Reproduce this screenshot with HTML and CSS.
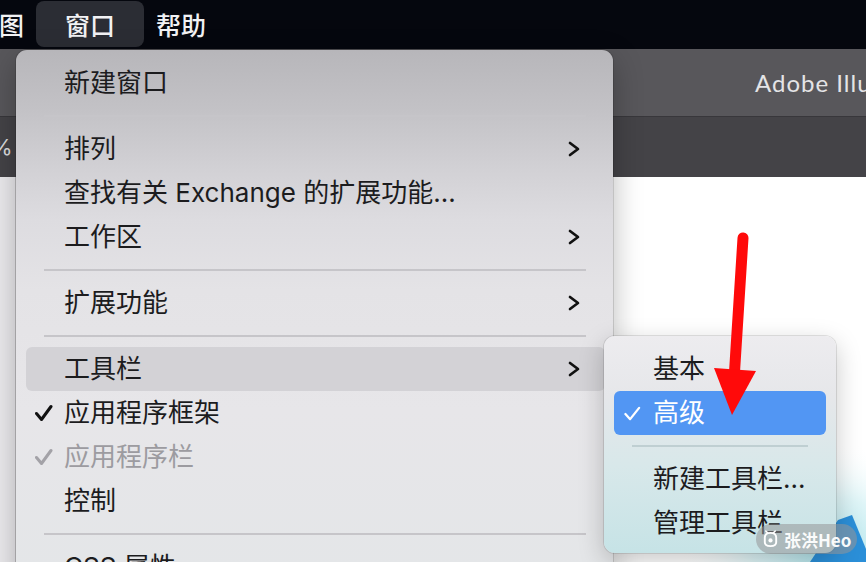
FILE: index.html
```html
<!DOCTYPE html>
<html lang="zh-CN">
<head>
<meta charset="utf-8">
<title>窗口菜单</title>
<link rel="stylesheet" href="styles.css">
</head>
<body>
<div class="screen">
  <header class="menubar">
    <span class="mb-item first">图</span>
    <span class="mb-item active">窗口</span>
    <span class="mb-item">帮助</span>
  </header>
  <div class="appbar"><span class="app-title">Adobe Illustrator 2021</span></div>
  <div class="toolbar"><span class="zoom">%</span></div>
  <div class="workspace">
    <div class="side"></div>
    <div class="canvas">
      <svg class="art" viewBox="0 0 252 385" width="252" height="385">
        <defs>
          <radialGradient id="glow" cx="0.85" cy="0.95" r="0.6">
            <stop offset="0" stop-color="#9fdde6" stop-opacity="0.9"/>
            <stop offset="0.5" stop-color="#c9eef2" stop-opacity="0.6"/>
            <stop offset="1" stop-color="#ffffff" stop-opacity="0"/>
          </radialGradient>
        </defs>
        <rect x="0" y="200" width="252" height="185" fill="url(#glow)"/>
        <polygon points="224,343 238,338 252,372 252,385 196,385" fill="#2b8fd8"/>
      </svg>
    </div>
  </div>

  <nav class="menu main-menu">
    <div class="item"><span class="chk"></span><span class="label">新建窗口</span></div>
    <div class="sep"></div>
    <div class="item"><span class="chk"></span><span class="label">排列</span>
      <svg class="chev" viewBox="0 0 12 16" width="12" height="16"><polyline points="2,2 10,8 2,14"/></svg></div>
    <div class="item"><span class="chk"></span><span class="label">查找有关 Exchange 的扩展功能...</span></div>
    <div class="item"><span class="chk"></span><span class="label">工作区</span>
      <svg class="chev" viewBox="0 0 12 16" width="12" height="16"><polyline points="2,2 10,8 2,14"/></svg></div>
    <div class="sep"></div>
    <div class="item"><span class="chk"></span><span class="label">扩展功能</span>
      <svg class="chev" viewBox="0 0 12 16" width="12" height="16"><polyline points="2,2 10,8 2,14"/></svg></div>
    <div class="sep"></div>
    <div class="item open"><span class="chk"></span><span class="label">工具栏</span>
      <svg class="chev" viewBox="0 0 12 16" width="12" height="16"><polyline points="2,2 10,8 2,14"/></svg></div>
    <div class="item"><span class="chk"><svg viewBox="0 0 18 18" width="18" height="18"><polyline class="tick" points="1.5,9.5 6.5,15.5 16,2.5"/></svg></span><span class="label">应用程序框架</span></div>
    <div class="item disabled"><span class="chk"><svg viewBox="0 0 18 18" width="18" height="18"><polyline class="tick" points="1.5,9.5 6.5,15.5 16,2.5"/></svg></span><span class="label">应用程序栏</span></div>
    <div class="item"><span class="chk"></span><span class="label">控制</span></div>
    <div class="sep"></div>
    <div class="item"><span class="chk"></span><span class="label">CSS 属性</span></div>
  </nav>

  <nav class="menu sub-menu">
    <div class="item"><span class="chk"></span><span class="label">基本</span></div>
    <div class="item selected"><span class="chk"><svg viewBox="0 0 18 18" width="17" height="17"><polyline class="tick thin" points="1.5,9.5 6.5,15 16,3"/></svg></span><span class="label">高级</span></div>
    <div class="sep"></div>
    <div class="item"><span class="chk"></span><span class="label">新建工具栏...</span></div>
    <div class="item"><span class="chk"></span><span class="label">管理工具栏</span></div>
  </nav>

  <svg class="arrow" viewBox="0 0 866 562" width="866" height="562">
    <line x1="743" y1="238" x2="734" y2="380" stroke="#ff0a0a" stroke-width="11" stroke-linecap="round"/>
    <polygon points="714,368 756,371 732,415" fill="#ff0a0a"/>
  </svg>

  <div class="watermark">
    <svg viewBox="0 0 20 20" width="19" height="19"><path d="M4 8 Q4 3 10 3 Q16 3 16 8 L16 13 Q16 17 10 17 Q4 17 4 13 Z" fill="none" stroke="#fff" stroke-width="2"/><path d="M7 3 L5 1 M13 3 L15 1" stroke="#fff" stroke-width="1.6" stroke-linecap="round"/><circle cx="10" cy="11" r="2.2" fill="#fff"/></svg>
    <span class="wm-text">张洪Heo</span>
  </div>
</div>
</body>
</html>
```

FILE: styles.css
```css
* { box-sizing: border-box; margin: 0; padding: 0; }

html, body {
  width: 866px;
  height: 562px;
  overflow: hidden;
  background: #ffffff;
}

body {
  font-family: "Inter", "Noto Sans CJK SC", sans-serif;
}

.screen {
  position: relative;
  width: 866px;
  height: 562px;
  overflow: hidden;
  display: flex;
  flex-direction: column;
}

/* top system menu bar */
.menubar {
  height: 49px;
  flex: none;
  background: #05070e;
  display: flex;
  align-items: flex-start;
  padding-top: 1px;
}

.mb-item {
  height: 46px;
  display: flex;
  align-items: center;
  padding: 0 12px;
  color: #f2f2f4;
  font-size: 25px;
  font-weight: 500;
  border-radius: 8px;
}

.mb-item.first { margin-left: -13px; }

.mb-item.active {
  padding: 0 29px;
  background: #2b2d34;
}

/* application bar */
.appbar {
  height: 68px;
  flex: none;
  background: #58575b;
  border-bottom: 1px solid #38373b;
  display: flex;
  align-items: center;
  padding-left: 755px;
  white-space: nowrap;
  overflow: hidden;
}

.app-title {
  color: #e4e4e6;
  font-size: 24px;
  font-family: "Lato", "Inter", sans-serif;
  letter-spacing: 1px;
}

.toolbar {
  height: 60px;
  flex: none;
  background: #444347;
  display: flex;
  align-items: center;
}

.zoom {
  color: #dcdcde;
  font-size: 22px;
  margin-left: -9px;
}

.workspace {
  flex: 1;
  display: flex;
}

.side {
  width: 16px;
  flex: none;
  background: #ecebee;
  border-right: 1px solid #d6d5d9;
}

.canvas {
  flex: 1;
  background: #ffffff;
  display: flex;
  justify-content: flex-end;
}

.art { display: block; }

/* menus */
.menu {
  position: absolute;
  border-radius: 11px;
  color: #1c1c1e;
  font-size: 26px;
}

.main-menu {
  left: 16px;
  top: 50px;
  width: 597px;
  height: 560px;
  padding: 11px 8px 0 10px;
  background: linear-gradient(to bottom,
    #b7b6ba 0px,
    #c3c2c6 60px,
    #d2d1d5 120px,
    #dddce0 170px,
    #e4e3e6 240px,
    #e7e6e9 360px,
    #e4e6e8 520px);
  box-shadow: 0 10px 30px rgba(0,0,0,0.28), 0 0 0 1px rgba(0,0,0,0.12);
}

.sub-menu {
  left: 604px;
  top: 336px;
  width: 232px;
  height: 217px;
  padding: 11px 10px 9px 10px;
  background: linear-gradient(to bottom,
    #edecef 0px,
    #e6e7ea 60px,
    #d8e8ea 130px,
    #c6e3e6 217px);
  box-shadow: 0 8px 26px rgba(0,0,0,0.22), 0 0 0 1px rgba(0,0,0,0.10);
}

.item {
  height: 44px;
  display: flex;
  align-items: center;
  border-radius: 6px;
  padding-right: 25px;
  white-space: nowrap;
}

.chk {
  width: 38px;
  flex: none;
  display: flex;
  align-items: center;
  padding-left: 9px;
}

.sub-menu .chk { width: 39px; padding-left: 10px; }

.chk svg { display: block; }

.tick {
  fill: none;
  stroke: #111;
  stroke-width: 3;
  stroke-linecap: round;
  stroke-linejoin: round;
}

.tick.thin { stroke: #fff; stroke-width: 2.4; }

.label { flex: 1; line-height: 1; }

.chev {
  display: block;
  fill: none;
  stroke: #111;
  stroke-width: 2.7;
  stroke-linecap: round;
  stroke-linejoin: round;
}

.item.open { background: #d3d2d6; }

.item.disabled { color: #9c9ba0; }
.item.disabled .tick { stroke: #a3a2a7; }

.item.selected {
  background: #5296f3;
  color: #ffffff;
}

.sep {
  height: 2px;
  margin: 10px 19px 10px 18px;
  background: #c6c5c9;
}

.sub-menu .sep {
  margin: 10px 18px;
  background: #bfcfd2;
}

/* annotation overlay */
.arrow {
  position: absolute;
  left: 0;
  top: 0;
  pointer-events: none;
}

.watermark {
  position: absolute;
  left: 756px;
  top: 524px;
  width: 101px;
  height: 30px;
  border-radius: 15px;
  background: rgba(150, 150, 152, 0.55);
  display: flex;
  align-items: center;
  gap: 4px;
  padding-left: 5px;
}

.watermark svg { display: block; }

.wm-text {
  color: #ffffff;
  font-size: 17px;
  font-weight: 700;
  font-family: "Noto Sans CJK SC", sans-serif;
  opacity: 0.95;
}
```
